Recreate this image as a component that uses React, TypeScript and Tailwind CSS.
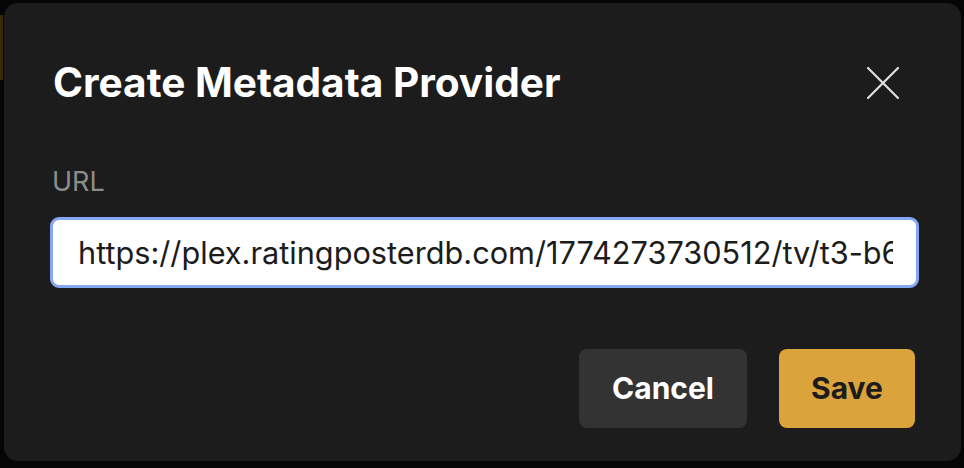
import React from "react";

export default function App() {
  return (
    <div className="w-[964px] h-[468px] bg-[#050505] pl-[4px] pt-[3px] overflow-hidden relative" style={{ fontFamily: "Inter, 'Noto Sans', sans-serif" }}>
      <div className="absolute left-0 top-[15px] w-[3px] h-[65px] bg-[#3a2a08]" />
      <div className="relative w-[957px] h-[458px] bg-[#1c1c1c] rounded-[14px] px-[46px] pt-[56px] flex flex-col">
        <div className="flex items-center justify-between">
          <h1 className="text-[40.6px] leading-[48px] font-bold text-white pl-[3px]">Create Metadata Provider</h1>
          <button className="w-[44px] h-[44px] flex items-center justify-center mr-[10px] text-[#e0e0e0]">
            <svg width="32" height="32" viewBox="0 0 32 32" fill="none" stroke="currentColor" strokeWidth="2.2" strokeLinecap="round">
              <path d="M1 1 L31 31 M31 1 L1 31" />
            </svg>
          </button>
        </div>
        <label className="mt-[60px] text-[27px] leading-[30px] text-[#8c8c8c] pl-[2px]">URL</label>
        <input
          readOnly
          value="https://plex.ratingposterdb.com/1774273730512/tv/t3-b6f0a"
          className="mt-[20px] h-[71px] w-[869px] rounded-[9px] border-[3px] border-[#87a6f4] bg-white pl-[25px] pr-[23px] text-[30.7px] text-[#1c1c1c] outline-none"
          style={{ fontFamily: "Inter, 'Noto Sans', sans-serif" }}
        />
        <div className="mt-[61px] flex justify-end gap-[32px]">
          <button className="w-[168px] h-[79px] rounded-[8px] bg-[#333333] text-white text-[30px] font-bold">Cancel</button>
          <button className="w-[136px] h-[79px] rounded-[8px] bg-[#dba33b] text-[#1c1c1c] text-[30px] font-bold">Save</button>
        </div>
      </div>
    </div>
  );
}
